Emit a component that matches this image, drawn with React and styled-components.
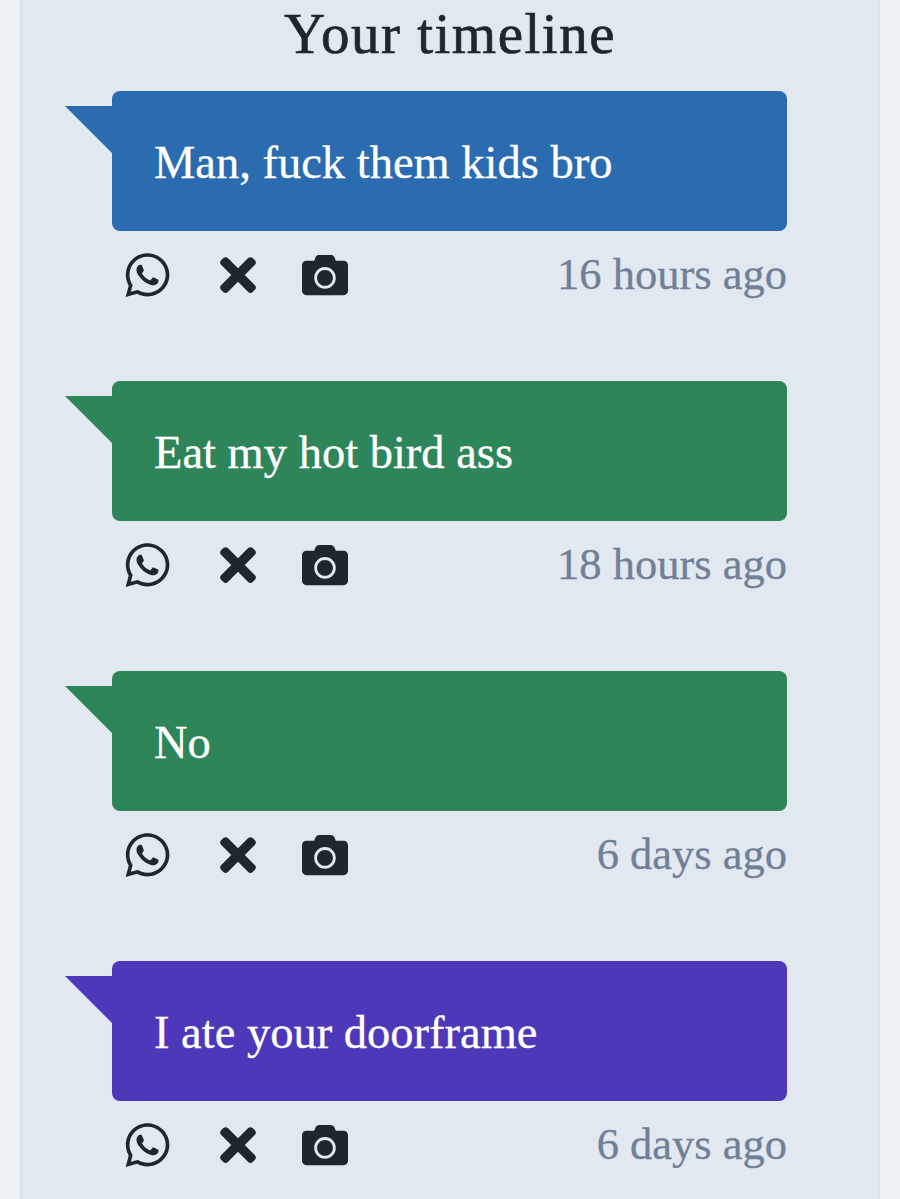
import React from 'react'
import styled, { createGlobalStyle } from 'styled-components'
import { FaWhatsapp, FaTimes, FaCamera } from 'react-icons/fa'

const posts = [
  { text: 'Man, fuck them kids bro', time: '16 hours ago', color: '#2b6cb0' },
  { text: 'Eat my hot bird ass', time: '18 hours ago', color: '#2f855a' },
  { text: 'No', time: '6 days ago', color: '#2f855a' },
  { text: 'I ate your doorframe', time: '6 days ago', color: '#4c38b8' },
]

const Global = createGlobalStyle`
  html, body { margin: 0; padding: 0; height: 100%; overflow: hidden; background: #edf2f7; }
  body { font-family: "Liberation Serif", "DejaVu Serif", serif; }
`

const Panel = styled.main`
  box-sizing: border-box;
  width: 860px;
  height: 1199px;
  margin-left: 20px;
  background: #e1e8f0;
  border-left: 2px solid #dbe2ec;
  border-right: 2px solid #dbe2ec;
  overflow: hidden;
`

const Title = styled.h1`
  margin: 0;
  height: 91px;
  padding-top: 6px;
  box-sizing: border-box;
  font-size: 57px;
  line-height: 56px;
  font-weight: 400;
  letter-spacing: 1.5px;
  text-align: center;
  color: #1f2630;
  -webkit-text-stroke: 0.7px #1f2630;
`

const Feed = styled.div`
  display: flex;
  flex-direction: column;
  gap: 64px;
  width: 675px;
  margin-left: 90px;
`

const Bubble = styled.div`
  position: relative;
  box-sizing: border-box;
  height: 140px;
  padding: 4px 0 0 42px;
  display: flex;
  align-items: center;
  border-radius: 8px;
  background: ${p => p.$color};
  color: #fff;
  font-size: 46.5px;
  line-height: 1;
  -webkit-text-stroke: 0.3px #fff;

  &::before {
    content: '';
    position: absolute;
    left: -47px;
    top: 15px;
    border-top: 47px solid ${p => p.$color};
    border-left: 47px solid transparent;
  }
`

const Meta = styled.div`
  display: flex;
  align-items: center;
  justify-content: space-between;
  height: 86px;
`

const Actions = styled.div`
  display: flex;
  align-items: center;
  gap: 43px;
  color: #20262e;
  padding: 2px 0 0 13px;
`

const Action = styled.span`
  display: flex;
  justify-content: center;
  width: ${p => p.$w}px;
  font-size: ${p => p.$size}px;
  margin-left: ${p => p.$shift || 0}px;
  margin-right: ${p => -(p.$shift || 0)}px;
`

const Time = styled.span`
  font-size: 44.5px;
  color: #718096;
  -webkit-text-stroke: 0.3px #718096;
`

export default function App() {
  return (
    <>
      <Global />
      <Panel>
        <Title>Your timeline</Title>
        <Feed>
          {posts.map((p, i) => (
            <article key={i}>
              <Bubble $color={p.color}>{p.text}</Bubble>
              <Meta>
                <Actions>
                  <Action $w={45} $size={50}><FaWhatsapp /></Action>
                  <Action $w={46} $size={52} $shift={2}><FaTimes /></Action>
                  <Action $w={46} $size={48}><FaCamera /></Action>
                </Actions>
                <Time>{p.time}</Time>
              </Meta>
            </article>
          ))}
        </Feed>
      </Panel>
    </>
  )
}
